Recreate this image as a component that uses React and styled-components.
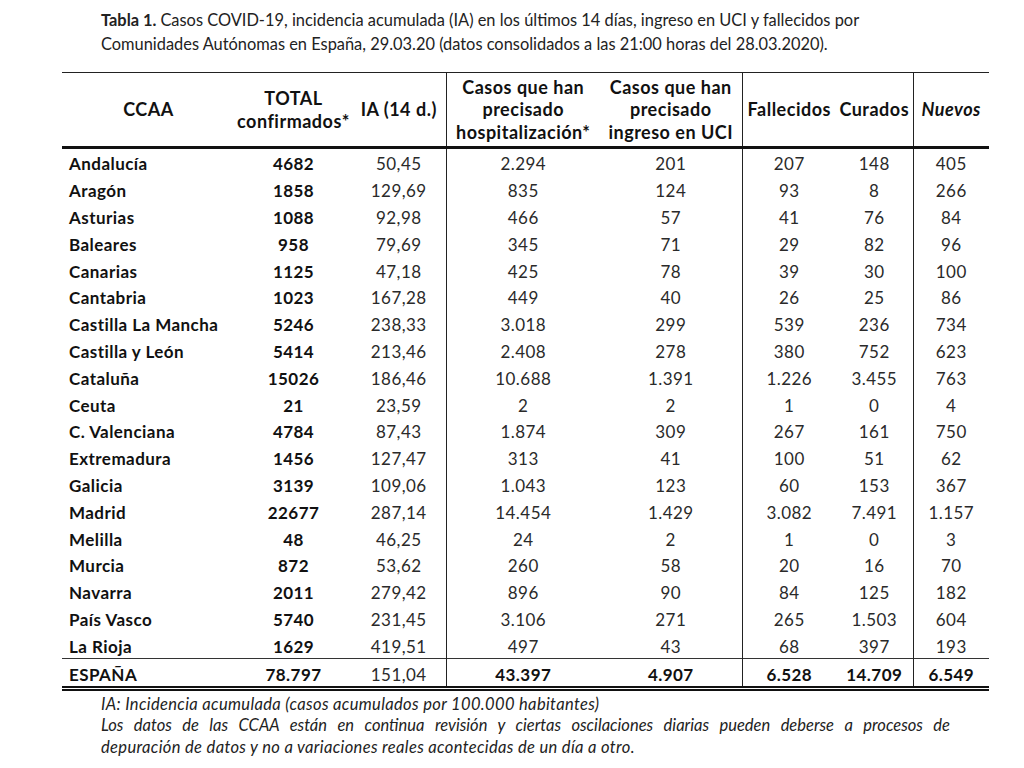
import React from "react";
import styled, { createGlobalStyle } from "styled-components";

const rows = [
  ["Andalucía", "4682", "50,45", "2.294", "201", "207", "148", "405"],
  ["Aragón", "1858", "129,69", "835", "124", "93", "8", "266"],
  ["Asturias", "1088", "92,98", "466", "57", "41", "76", "84"],
  ["Baleares", "958", "79,69", "345", "71", "29", "82", "96"],
  ["Canarias", "1125", "47,18", "425", "78", "39", "30", "100"],
  ["Cantabria", "1023", "167,28", "449", "40", "26", "25", "86"],
  ["Castilla La Mancha", "5246", "238,33", "3.018", "299", "539", "236", "734"],
  ["Castilla y León", "5414", "213,46", "2.408", "278", "380", "752", "623"],
  ["Cataluña", "15026", "186,46", "10.688", "1.391", "1.226", "3.455", "763"],
  ["Ceuta", "21", "23,59", "2", "2", "1", "0", "4"],
  ["C. Valenciana", "4784", "87,43", "1.874", "309", "267", "161", "750"],
  ["Extremadura", "1456", "127,47", "313", "41", "100", "51", "62"],
  ["Galicia", "3139", "109,06", "1.043", "123", "60", "153", "367"],
  ["Madrid", "22677", "287,14", "14.454", "1.429", "3.082", "7.491", "1.157"],
  ["Melilla", "48", "46,25", "24", "2", "1", "0", "3"],
  ["Murcia", "872", "53,62", "260", "58", "20", "16", "70"],
  ["Navarra", "2011", "279,42", "896", "90", "84", "125", "182"],
  ["País Vasco", "5740", "231,45", "3.106", "271", "265", "1.503", "604"],
  ["La Rioja", "1629", "419,51", "497", "43", "68", "397", "193"],
];

const total = ["ESPAÑA", "78.797", "151,04", "43.397", "4.907", "6.528", "14.709", "6.549"];

const widths = [173, 117, 94, 154, 142, 94, 77, 76];
// columns followed by a vertical rule
const ruled = [2, 4, 6];

const GlobalStyle = createGlobalStyle`
  body {
    margin: 0;
    background: #fff;
    font-family: "Lato", "Open Sans", sans-serif;
    color: #1c1c1c;
  }
`;

const Page = styled.div`
  width: 1024px;
  height: 768px;
  padding-top: 8px;
  box-sizing: border-box;
`;

const Caption = styled.p`
  margin: 0 0 0 101px;
  width: 800px;
  font-size: 16.4px;
  line-height: 24px;
  color: #222;
`;

const Strong = styled.span`
  font-weight: 700;
  margin-right: 4px;
`;

const Table = styled.table`
  margin: 16px 0 0 62px;
  width: 927px;
  border-collapse: collapse;
  table-layout: fixed;
  border-top: 1px solid #222;
  border-bottom: 5px double #111;
`;

const HeadCell = styled.th`
  height: 73px;
  padding: 0;
  font-size: 18px;
  letter-spacing: 0.5px;
  line-height: 22.5px;
  font-weight: 700;
  font-style: ${(p) => (p.$italic ? "italic" : "normal")};
  color: #111;
  text-align: center;
  vertical-align: middle;
  white-space: nowrap;
  border-bottom: 3px solid #111;
  border-right: ${(p) => (p.$ruled ? "1px solid #222" : "none")};
`;

const Cell = styled.td`
  height: 22.8px;
  padding: 4px 0 0 ${(p) => (p.$left ? "7px" : "0")};
  font-size: 17px;
  letter-spacing: 0.45px;
  line-height: 22px;
  font-weight: ${(p) => (p.$bold ? 700 : 400)};
  color: ${(p) => (p.$bold ? "#111" : "#2a2a2a")};
  text-align: ${(p) => (p.$left ? "left" : "center")};
  white-space: nowrap;
  border-right: ${(p) => (p.$ruled ? "1px solid #222" : "none")};
`;

const TotalRow = styled.tr`
  border-top: 1px solid #333;
`;

const Notes = styled.div`
  margin: 3px 0 0 101px;
  width: 849px;
  font-style: italic;
  font-size: 16.5px;
  letter-spacing: 0.35px;
  line-height: 21.5px;
  color: #222;
`;

const NoteLine = styled.p`
  margin: 0;
  white-space: nowrap;
  letter-spacing: ${(p) => (p.$justify ? "0" : "inherit")};
  text-align: ${(p) => (p.$justify ? "justify" : "left")};
  text-align-last: ${(p) => (p.$justify ? "justify" : "left")};
`;

function App() {
  return (
    <Page>
      <GlobalStyle />
      <Caption>
        <Strong>Tabla 1.</Strong>
        Casos COVID-19, incidencia acumulada (IA) en los últimos 14 días, ingreso en UCI y fallecidos por
        Comunidades Autónomas en España, 29.03.20 (datos consolidados a las 21:00 horas del 28.03.2020).
      </Caption>
      <Table>
        <colgroup>
          {widths.map((w, i) => (
            <col key={i} style={{ width: w }} />
          ))}
        </colgroup>
        <thead>
          <tr>
            <HeadCell>CCAA</HeadCell>
            <HeadCell>
              TOTAL
              <br />
              confirmados*
            </HeadCell>
            <HeadCell $ruled>IA (14 d.)</HeadCell>
            <HeadCell>
              Casos que han
              <br />
              precisado
              <br />
              hospitalización*
            </HeadCell>
            <HeadCell $ruled>
              Casos que han
              <br />
              precisado
              <br />
              ingreso en UCI
            </HeadCell>
            <HeadCell>Fallecidos</HeadCell>
            <HeadCell $ruled>Curados</HeadCell>
            <HeadCell $italic>Nuevos</HeadCell>
          </tr>
        </thead>
        <tbody>
          {rows.map((r) => (
            <tr key={r[0]}>
              {r.map((v, i) => (
                <Cell key={i} $left={i === 0} $bold={i < 2} $ruled={ruled.includes(i)}>
                  {v}
                </Cell>
              ))}
            </tr>
          ))}
          <TotalRow>
            {total.map((v, i) => (
              <Cell key={i} $left={i === 0} $bold={i !== 2} $ruled={ruled.includes(i)}>
                {v}
              </Cell>
            ))}
          </TotalRow>
        </tbody>
      </Table>
      <Notes>
        <NoteLine>IA: Incidencia acumulada (casos acumulados por 100.000 habitantes)</NoteLine>
        <NoteLine $justify>
          Los datos de las CCAA están en continua revisión y ciertas oscilaciones diarias pueden deberse a
          procesos de
        </NoteLine>
        <NoteLine>depuración de datos y no a variaciones reales acontecidas de un día a otro.</NoteLine>
      </Notes>
    </Page>
  );
}

export default App;
